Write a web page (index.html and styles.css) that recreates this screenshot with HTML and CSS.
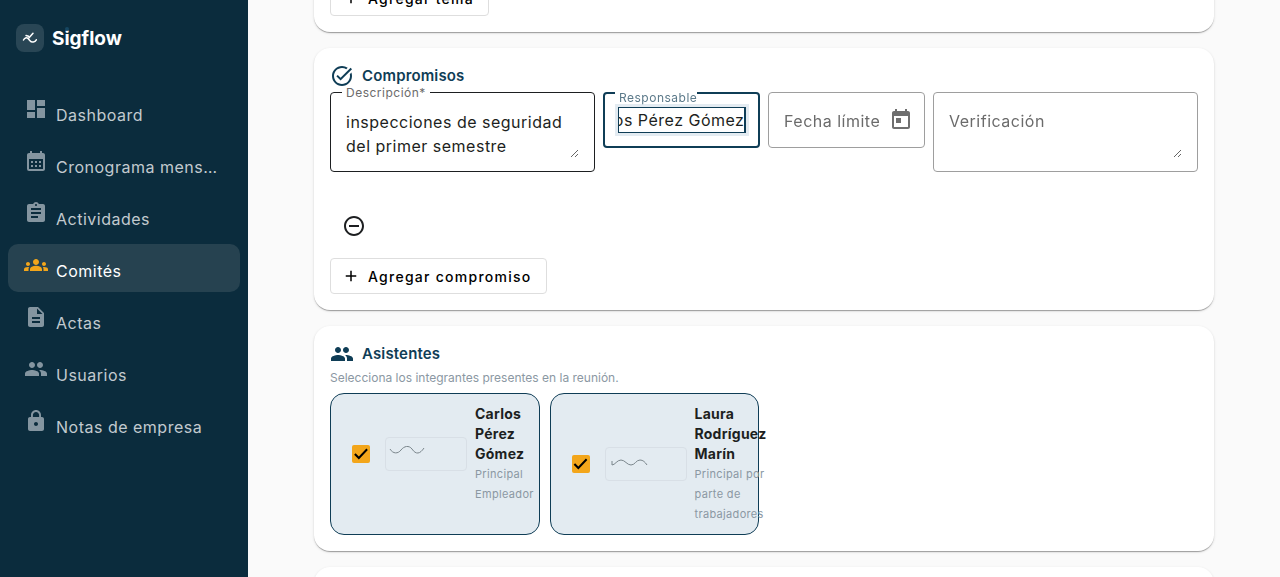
FILE: index.html
```html
<!DOCTYPE html>
<html lang="es">
<head>
    <meta charset="UTF-8">
    <meta name="viewport" content="width=device-width, initial-scale=1.0">
    <title>Sigflow</title>
    <link rel="stylesheet" href="styles.css">
</head>
<body>
    <aside class="sidebar">
        <div class="brand">
            <span class="brand-logo">
                <svg width="16" height="16" viewBox="0 0 16 16" fill="none" stroke="#fff" stroke-width="1.5" stroke-linecap="round" stroke-linejoin="round">
                    <path d="M1.500 10C2.500 8 4.500 7 6 8.500L8 10.800C9.500 12.700 13 12.500 14.300 9.800"/>
                    <path d="M4 5.500L6.500 6.300M11 3.300L6.800 8"/>
                </svg>
            </span>
            <span class="brand-name">Sigflow</span>
        </div>
        <nav class="nav">
            <a class="nav-item" href="#">
                <svg class="icon" viewBox="0 0 24 24"><path d="M3 13h8V3H3v10zm0 8h8v-6H3v6zm10 0h8V11h-8v10zm0-18v6h8V3h-8z"/></svg>
                <span class="nav-text">Dashboard</span>
            </a>
            <a class="nav-item" href="#">
                <svg class="icon" viewBox="0 0 24 24"><path d="M19 4h-1V2h-2v2H8V2H6v2H5c-1.110 0-1.990.9-1.990 2L3 20a2 2 0 0 0 2 2h14c1.100 0 2-.9 2-2V6c0-1.100-.9-2-2-2zm0 16H5V10h14v10zM9 14H7v-2h2v2zm4 0h-2v-2h2v2zm4 0h-2v-2h2v2zm-8 4H7v-2h2v2zm4 0h-2v-2h2v2zm4 0h-2v-2h2v2z"/></svg>
                <span class="nav-text">Cronograma mensual</span>
            </a>
            <a class="nav-item" href="#">
                <svg class="icon" viewBox="0 0 24 24"><path d="M19 3h-4.180C14.400 1.840 13.300 1 12 1s-2.400.84-2.820 2H5c-1.100 0-2 .9-2 2v14c0 1.100.9 2 2 2h14c1.100 0 2-.9 2-2V5c0-1.100-.9-2-2-2zm-7 0c.55 0 1 .45 1 1s-.45 1-1 1-1-.45-1-1 .45-1 1-1zm2 14H7v-2h7v2zm3-4H7v-2h10v2zm0-4H7V7h10v2z"/></svg>
                <span class="nav-text">Actividades</span>
            </a>
            <a class="nav-item active" href="#">
                <svg class="icon" viewBox="0 0 24 24"><path d="M12 12.750c1.630 0 3.070.39 4.240.9 1.080.48 1.760 1.560 1.760 2.730V18H6v-1.610c0-1.180.68-2.260 1.760-2.730 1.170-.52 2.610-.91 4.240-.91zM4 13c1.100 0 2-.9 2-2s-.9-2-2-2-2 .9-2 2 .9 2 2 2zm1.130 1.100c-.37-.06-.74-.1-1.130-.1-.99 0-1.930.21-2.780.58A2.010 2.010 0 0 0 0 16.430V18h4.500v-1.610c0-.83.23-1.610.63-2.290zM20 13c1.100 0 2-.9 2-2s-.9-2-2-2-2 .9-2 2 .9 2 2 2zm4 3.430c0-.81-.48-1.530-1.220-1.850A6.950 6.950 0 0 0 20 14c-.39 0-.76.04-1.130.1.4.68.63 1.460.63 2.290V18H24v-1.570zM12 6c1.660 0 3 1.340 3 3s-1.340 3-3 3-3-1.340-3-3 1.340-3 3-3z"/></svg>
                <span class="nav-text">Comités</span>
            </a>
            <a class="nav-item" href="#">
                <svg class="icon" viewBox="0 0 24 24"><path d="M14 2H6c-1.100 0-1.990.9-1.990 2L4 20c0 1.100.89 2 1.990 2H18c1.100 0 2-.9 2-2V8l-6-6zm2 16H8v-2h8v2zm0-4H8v-2h8v2zm-3-5V3.500L18.500 9H13z"/></svg>
                <span class="nav-text">Actas</span>
            </a>
            <a class="nav-item" href="#">
                <svg class="icon" viewBox="0 0 24 24"><path d="M16 11c1.660 0 2.990-1.340 2.990-3S17.660 5 16 5s-3 1.340-3 3 1.340 3 3 3zm-8 0c1.660 0 2.990-1.340 2.990-3S9.660 5 8 5 5 6.340 5 8s1.340 3 3 3zm0 2c-2.330 0-7 1.170-7 3.500V19h14v-2.500c0-2.330-4.670-3.500-7-3.500zm8 0c-.29 0-.62.02-.97.05 1.160.84 1.970 1.970 1.970 3.450V19h6v-2.500c0-2.330-4.670-3.500-7-3.500z"/></svg>
                <span class="nav-text">Usuarios</span>
            </a>
            <a class="nav-item" href="#">
                <svg class="icon" viewBox="0 0 24 24"><path d="M18 8h-1V6c0-2.760-2.240-5-5-5S7 3.240 7 6v2H6c-1.100 0-2 .9-2 2v10c0 1.100.9 2 2 2h12c1.100 0 2-.9 2-2V10c0-1.100-.9-2-2-2zm-6 9c-1.100 0-2-.9-2-2s.9-2 2-2 2 .9 2 2-.9 2-2 2zm3.100-9H8.900V6c0-1.710 1.390-3.100 3.100-3.100s3.100 1.390 3.100 3.100v2z"/></svg>
                <span class="nav-text">Notas de empresa</span>
            </a>
        </nav>
    </aside>

    <main class="main">
        <form class="content">
            <section class="card">
                <button type="button" class="btn">
                    <svg class="icon-sm" viewBox="0 0 24 24"><path d="M19 13h-6v6h-2v-6H5v-2h6V5h2v6h6v2z"/></svg>
                    <span class="btn-text">Agregar tema</span>
                </button>
            </section>

            <section class="card">
                <h3 class="card-title">
                    <svg class="icon" viewBox="0 0 24 24"><path d="M22 5.180 10.590 16.600l-4.240-4.240 1.410-1.410 2.830 2.830 10-10L22 5.180zm-2.210 5.040c.13.57.21 1.170.21 1.780 0 4.420-3.580 8-8 8s-8-3.580-8-8 3.580-8 8-8c1.580 0 3.040.46 4.280 1.250l1.440-1.440A9.900 9.900 0 0 0 12 2C6.480 2 2 6.480 2 12s4.480 10 10 10 10-4.480 10-10c0-1.190-.22-2.330-.6-3.390l-1.610 1.610z"/></svg>
                    Compromisos
                </h3>
                <div class="fields">
                    <div class="field field-area filled">
                        <label class="label-float" for="descripcion">Descripción*</label>
                        <textarea id="descripcion" rows="2">inspecciones de seguridad del primer semestre</textarea>
                    </div>
                    <div class="field focused">
                        <label class="label-float" for="responsable">Responsable</label>
                        <input type="text" id="responsable" value="Carlos Pérez Gómez">
                    </div>
                    <div class="field">
                        <label class="label-inside" for="fecha">Fecha límite</label>
                        <input type="text" id="fecha">
                        <button type="button" class="btn-icon btn-date" aria-label="Abrir calendario">
                            <svg class="icon" viewBox="0 0 24 24"><path d="M19 3h-1V1h-2v2H8V1H6v2H5c-1.110 0-1.990.9-1.990 2L3 19c0 1.100.89 2 2 2h14c1.100 0 2-.9 2-2V5c0-1.100-.9-2-2-2zm0 16H5V8h14v11zM7 10h5v5H7z"/></svg>
                        </button>
                    </div>
                    <div class="field field-area">
                        <label class="label-inside" for="verificacion">Verificación</label>
                        <textarea id="verificacion" rows="2"></textarea>
                    </div>
                </div>
                <button type="button" class="btn-icon btn-remove" aria-label="Quitar compromiso">
                    <svg class="icon" viewBox="0 0 24 24"><path d="M7 11v2h10v-2H7zm5-9C6.480 2 2 6.480 2 12s4.480 10 10 10 10-4.480 10-10S17.520 2 12 2zm0 18c-4.410 0-8-3.590-8-8s3.590-8 8-8 8 3.590 8 8-3.590 8-8 8z"/></svg>
                </button>
                <button type="button" class="btn">
                    <svg class="icon-sm" viewBox="0 0 24 24"><path d="M19 13h-6v6h-2v-6H5v-2h6V5h2v6h6v2z"/></svg>
                    <span class="btn-text">Agregar compromiso</span>
                </button>
            </section>

            <section class="card">
                <h3 class="card-title">
                    <svg class="icon" viewBox="0 0 24 24"><path d="M16 11c1.660 0 2.990-1.340 2.990-3S17.660 5 16 5s-3 1.340-3 3 1.340 3 3 3zm-8 0c1.660 0 2.990-1.340 2.990-3S9.660 5 8 5 5 6.340 5 8s1.340 3 3 3zm0 2c-2.330 0-7 1.170-7 3.500V19h14v-2.500c0-2.330-4.670-3.500-7-3.500zm8 0c-.29 0-.62.02-.97.05 1.160.84 1.970 1.970 1.970 3.450V19h6v-2.500c0-2.330-4.670-3.500-7-3.500z"/></svg>
                    Asistentes
                </h3>
                <p class="hint">Selecciona los integrantes presentes en la reunión.</p>
                <div class="people">
                    <div class="person">
                        <label class="person-label">
                            <input type="checkbox" class="check" checked>
                            <span class="signature">
                                <svg width="80" height="32" viewBox="0 0 80 32" fill="none" stroke="#7b868c" stroke-width="1">
                                    <path d="M4 11C7 16 12 16 15 12C18 8 23 7 26 11C30 17 34 16 38 10"/>
                                </svg>
                            </span>
                            <span class="person-info">
                                <span class="person-name">Carlos Pérez Gómez</span>
                                <span class="person-role">Principal Empleador</span>
                            </span>
                        </label>
                    </div>
                    <div class="person">
                        <label class="person-label">
                            <input type="checkbox" class="check" checked>
                            <span class="signature">
                                <svg width="80" height="32" viewBox="0 0 80 32" fill="none" stroke="#7b868c" stroke-width="1">
                                    <path d="M6 13V17C9 17 11 12 15 12C19 12 21 17 25 17C29 17 30 12 34 12C37 12 39 14 41 17"/>
                                </svg>
                            </span>
                            <span class="person-info">
                                <span class="person-name">Laura Rodríguez Marín</span>
                                <span class="person-role">Principal por parte de trabajadores</span>
                            </span>
                        </label>
                    </div>
                </div>
            </section>

            <section class="card"></section>
        </form>
    </main>

    <script>
        // keep the end of a long name in view while the field is focused
        const responsable = document.getElementById("responsable");
        responsable.focus();
        responsable.setSelectionRange(responsable.value.length, responsable.value.length);
        responsable.scrollLeft = responsable.scrollWidth;
    </script>
</body>
</html>
```
FILE: styles.css
```css
* {
    box-sizing: border-box;
}

body {
    margin: 0;
    display: flex;
    height: 100vh;
    overflow: hidden;
    background: #fafafa;
    color: #1d1f21;
    font-family: Inter, sans-serif;
    font-size: 16px;
    line-height: 24px;
    letter-spacing: 0.03125em;
}

input,
textarea,
button {
    font: inherit;
    letter-spacing: inherit;
    color: inherit;
}

.icon {
    width: 24px;
    height: 24px;
    flex: none;
    fill: currentColor;
}

.icon-sm {
    width: 18px;
    height: 18px;
    flex: none;
    fill: currentColor;
}

/* sidebar */
.sidebar {
    width: 248px;
    flex: none;
    background: #0b2c3d;
    color: #fff;
}

.brand {
    display: flex;
    align-items: center;
    gap: 8px;
    padding: 24px 16px 36px;
}

.brand-logo {
    display: flex;
    align-items: center;
    justify-content: center;
    width: 28px;
    height: 28px;
    border-radius: 8px;
    background: #294655;
}

.brand-name {
    position: relative;
    padding-top: 2px;
    font-size: 19px;
    font-weight: 700;
    letter-spacing: normal;
}

/* accent over the i */
.brand-name::before {
    content: "";
    position: absolute;
    top: 2px;
    left: 13px;
    width: 4px;
    height: 4px;
    border-radius: 50%;
    background: #164661;
}

.nav {
    display: flex;
    flex-direction: column;
    gap: 4px;
    padding: 0 8px;
}

.nav-item {
    display: flex;
    align-items: flex-start;
    gap: 8px;
    height: 48px;
    padding: 9px 16px;
    border-radius: 10px;
    color: #c2cacf;
    text-decoration: none;
}

.nav-item .icon {
    color: #8495a0;
}

.nav-item.active {
    background: #264250;
    color: #fff;
}

.nav-item.active .icon {
    color: #f3a61b;
}

.nav-text {
    padding-top: 6px;
    overflow: hidden;
    text-overflow: ellipsis;
    white-space: nowrap;
}

/* content */
.main {
    flex: 1;
    min-width: 0;
    padding: 0 24px;
}

/* pulled up: the page is scrolled past the topics card */
.content {
    display: flex;
    flex-direction: column;
    gap: 16px;
    max-width: 900px;
    margin: -36px auto 0;
}

.card {
    padding: 16px;
    border-radius: 16px;
    background: #fff;
    box-shadow: 0 2px 1px -1px rgba(0, 0, 0, 0.2), 0 1px 1px rgba(0, 0, 0, 0.14), 0 1px 3px rgba(0, 0, 0, 0.12);
}

.card-title {
    display: flex;
    align-items: center;
    gap: 8px;
    margin: 0;
    color: #0f3d56;
    font-size: 15px;
    font-weight: 600;
    letter-spacing: 0.01em;
}

.hint {
    margin: 2px 0 5px;
    color: #8b98a3;
    font-size: 12px;
    line-height: 20px;
    letter-spacing: normal;
}

.btn {
    display: flex;
    align-items: center;
    gap: 8px;
    height: 36px;
    padding: 0 14px 0 11px;
    border: 1px solid #dedede;
    border-radius: 4px;
    background: #fff;
    color: #000;
    font-size: 14px;
    font-weight: 500;
    letter-spacing: 0.09em;
}

.btn-text {
    padding-top: 2px;
}

.btn-icon {
    display: flex;
    align-items: center;
    justify-content: center;
    padding: 0;
    border: 0;
    background: none;
}

.btn-remove {
    width: 48px;
    height: 48px;
    margin: 8px 0;
}

.btn-date {
    color: #6f6f6f;
}

/* form fields */
.fields {
    display: grid;
    grid-template-columns: 27fr 16fr 16fr 27fr;
    align-items: start;
    gap: 8px;
    padding: 4px 0 22px;
}

.field {
    position: relative;
    display: flex;
    align-items: center;
    height: 56px;
    padding: 0 11px 0 15px;
    border: 1px solid #9e9e9e;
    border-radius: 4px;
}

.field-area {
    height: 80px;
    align-items: flex-start;
    padding: 17px 15px 13px;
}

.field.filled {
    border-color: #1d1f21;
}

.field.focused {
    padding: 0 13px 0 14px;
    border: 2px solid #0f3d56;
}

.field input,
.field textarea {
    flex: 1;
    min-width: 0;
    width: 100%;
    height: 24px;
    margin: 0;
    padding: 0;
    border: 0;
    outline: 0;
    background: none;
}

.field textarea {
    height: 48px;
    resize: vertical;
}

.field.focused input {
    border-right: 1px solid #0f3d56;
    outline: 1px solid #0f3d56;
    box-shadow: 0 0 0 4px #e3ebf1;
}

/* white only behind the border line, to leave a notch */
.label-float {
    position: absolute;
    top: -8px;
    left: 11px;
    padding: 0 4px;
    background: linear-gradient(#fff, #fff) no-repeat 0 7px / 100% 2px;
    color: #6b6b6b;
    font-size: 12px;
    line-height: 16px;
}

.focused .label-float {
    top: -4px;
    left: 10px;
    padding-right: 0;
    background-position: 0 2px;
    color: #5c7a8a;
}

.label-inside {
    position: absolute;
    top: 16px;
    left: 15px;
    color: #6b6b6b;
}

/* attendees */
.people {
    display: grid;
    grid-template-columns: repeat(auto-fill, minmax(200px, 1fr));
    gap: 10px;
}

.person {
    padding: 10px;
    border: 1px solid #0f3d56;
    border-radius: 14px;
    background: #e3ebf1;
}

.person-label {
    display: flex;
    align-items: center;
}

.check {
    appearance: none;
    flex: none;
    width: 18px;
    height: 18px;
    margin: 0 15px 0 11px;
    border-radius: 2px;
    background: #f3a61b;
}

.check:checked::before {
    content: "";
    display: block;
    width: 18px;
    height: 18px;
    background: #000;
    clip-path: polygon(12% 54%, 20% 46%, 38% 64%, 80% 20%, 88% 28%, 38% 80%);
}

.signature {
    display: flex;
    flex: none;
    margin-right: 8px;
    border: 1px solid #d8dfe6;
    border-radius: 4px;
}

.person-info {
    display: flex;
    flex-direction: column;
    font-size: 14px;
    line-height: 20px;
    letter-spacing: 0.018em;
}

.person-name {
    font-weight: 700;
}

.person-role {
    color: #8b98a3;
    font-size: 11px;
    letter-spacing: 0.03em;
}
```
